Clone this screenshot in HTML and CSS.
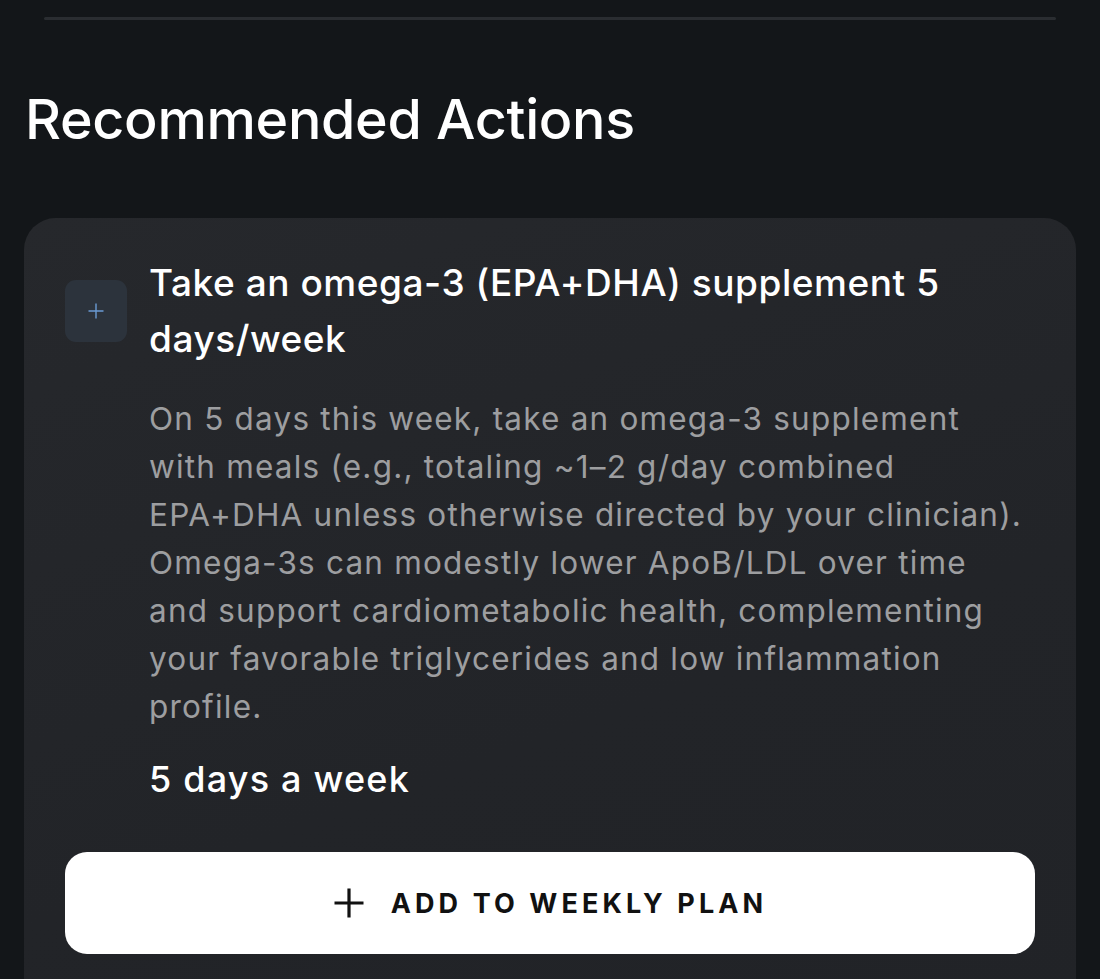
FILE: index.html
```html
<!DOCTYPE html>
<html lang="en">
<head>
<meta charset="utf-8">
<title>Recommended Actions</title>
<link rel="stylesheet" href="styles.css">
</head>
<body>
<div class="page">
  <div class="divider"></div>
  <h1 class="section-title">Recommended Actions</h1>
  <div class="card">
    <div class="card-head">
      <div class="icon-box">
        <svg width="18" height="18" viewBox="0 0 18 18"><path d="M9 1.5v15M1.5 9h15" stroke="#6a9bd3" stroke-width="1.4" fill="none"/></svg>
      </div>
      <h2 class="action-title">Take an omega-3 (EPA+DHA) supplement 5 days/week</h2>
    </div>
    <div class="card-body">
      <p class="action-desc">On 5 days this week, take an omega-3 supplement with meals (e.g., totaling ~1–2 g/day combined EPA+DHA unless otherwise directed by your clinician). Omega-3s can modestly lower ApoB/LDL over time and support cardiometabolic health, complementing your favorable triglycerides and low inflammation profile.</p>
      <p class="action-freq">5 days a week</p>
    </div>
    <button class="add-btn" type="button">
      <svg width="32" height="32" viewBox="0 0 32 32"><path d="M16 1.5v29M1.5 16h29" stroke="#111" stroke-width="3.2" fill="none"/></svg>
      <span>ADD TO WEEKLY PLAN</span>
    </button>
  </div>
</div>
</body>
</html>
```
FILE: styles.css
```css
* { box-sizing: border-box; }
html, body {
  margin: 0;
  padding: 0;
  background: #131619;
  height: 100%;
  overflow: hidden;
}
body {
  font-family: Inter, "Noto Sans", sans-serif;
  color: #ffffff;
}
.page {
  padding: 17px 24px 0 24px;
}
.divider {
  height: 3px;
  background: #2a2d31;
  margin: 0 20px 0 20px;
  border-radius: 2px;
}
.section-title {
  margin: 64px 0 0 1px;
  font-size: 55.6px;
  font-weight: 500;
  line-height: 70px;
  letter-spacing: -0.3px;
}
.card {
  margin-top: 64px;
  background: linear-gradient(160deg, #26282c 0%, #222428 60%, #212327 100%);
  border-radius: 32px;
  padding: 37px 41px 60px 41px;
  min-height: 800px;
}
.card-head {
  display: flex;
  align-items: center;
  gap: 22px;
}
.icon-box {
  flex: 0 0 62px;
  width: 62px;
  height: 62px;
  border-radius: 11px;
  background: #2c333c;
  display: flex;
  align-items: center;
  justify-content: center;
}
.action-title {
  margin: 0;
  font-size: 37px;
  font-weight: 500;
  line-height: 56px;
  letter-spacing: 0.55px;
}
.card-body {
  padding-left: 84px;
}
.action-desc {
  margin: 28px 0 0 0;
  font-size: 31.5px;
  line-height: 48px;
  color: #9d9ea0;
  font-weight: 400;
  letter-spacing: 1.2px;
}
.action-freq {
  margin: 20px 0 0 0;
  font-size: 36px;
  font-weight: 500;
  line-height: 56px;
  letter-spacing: 1.2px;
}
.add-btn {
  margin-top: 45px;
  width: 100%;
  height: 102px;
  border: none;
  border-radius: 22px;
  background: #ffffff;
  display: flex;
  align-items: center;
  justify-content: center;
  gap: 26px;
  font-family: Inter, "Noto Sans", sans-serif;
  font-size: 27px;
  font-weight: 700;
  letter-spacing: 4.1px;
  color: #111111;
}
```
